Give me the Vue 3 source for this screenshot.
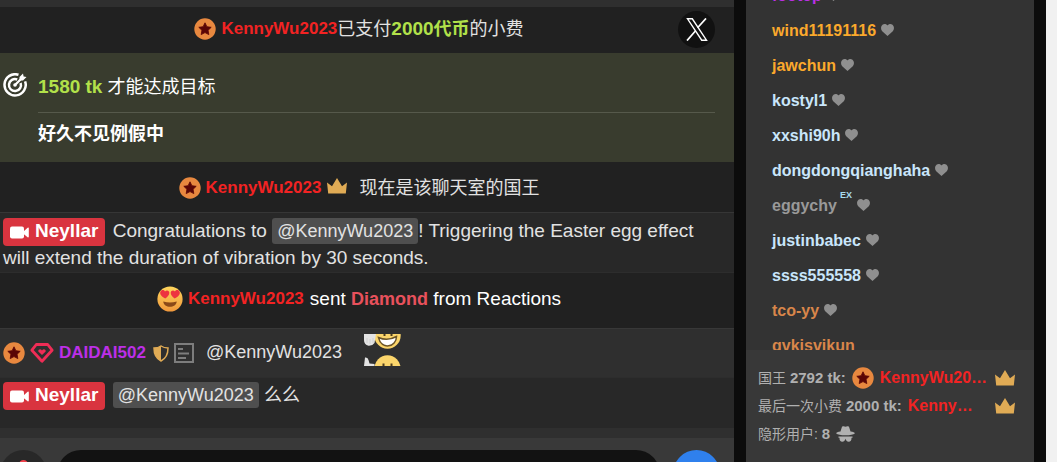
<script setup>
import { h } from 'vue'

const users = [
  { name: 'footop', tone: 'violet' },
  { name: 'wind11191116', tone: 'amber' },
  { name: 'jawchun', tone: 'amber' },
  { name: 'kostyl1', tone: 'ice' },
  { name: 'xxshi90h', tone: 'ice' },
  { name: 'dongdongqianghaha', tone: 'ice' },
  { name: 'eggychy', tone: 'grey', ex: true },
  { name: 'justinbabec', tone: 'ice' },
  { name: 'ssss555558', tone: 'ice' },
  { name: 'tco-yy', tone: 'copper' },
  { name: 'gvkisvikun', tone: 'copper', plain: true },
]

const StarBadge = () =>
  h('svg', { width: 22, height: 22, viewBox: '0 0 22 22', 'aria-hidden': 'true' }, [
    h('circle', { cx: 11, cy: 11, r: 10.7, fill: '#e8883f' }),
    h('path', {
      d: 'M11 4.8l1.9 3.9 4.3.6-3.1 3 .7 4.3-3.8-2-3.8 2 .7-4.3-3.1-3 4.3-.6z',
      fill: '#5a0505', stroke: '#5a0505', 'stroke-width': 0.8, 'stroke-linejoin': 'round',
    }),
  ])

const Crown = () =>
  h('svg', { width: 20, height: 16, viewBox: '0 0 20 16', 'aria-hidden': 'true' }, [
    h('path', { d: 'M1.2 15.5L0 4.6l5 3.6L10 0l5 8.2 5-3.6-1.2 10.9z', fill: '#e0ab55' }),
  ])

const Camera = () =>
  h('svg', { width: 19, height: 13, viewBox: '0 0 19 13', 'aria-hidden': 'true' }, [
    h('rect', { x: 0, y: 0.5, width: 14, height: 12, rx: 2, fill: '#fff' }),
    h('path', { d: 'M13 6l4.6-4.2q1.2-.6 1.2.6v8.2q0 1.200-1.200.6L13 7.600z', fill: '#fff' }),
  ])
</script>

<template>
  <div class="page">
    <main class="chat">
      <div class="log">
        <div class="sliver"></div>
        <div class="row tip">
          <StarBadge />
          <a class="name red lead" href="#">KennyWu2023</a>
          <span>已支付<b class="lime">2000<span class="cjk">代币</span></b>的小费</span>
          <a class="share" href="#" aria-label="X">
            <svg width="22" height="23" viewBox="0 0 22 23" aria-hidden="true">
              <path d="M1.500.8h4.800l14.200 21.400h-4.800z" fill="none" stroke="#fff" stroke-width="1.400" />
              <path d="M20 .4l-8.400 9.400M9.600 12.700L1 22.600" stroke="#fff" stroke-width="1.700" />
            </svg>
          </a>
        </div>

        <div class="goal">
          <svg class="target" width="24" height="24" viewBox="0 0 24 24" fill="none" stroke="#fff" aria-hidden="true">
            <path d="M15.500 1.800A10.600 10.600 0 1 0 22.100 8.300" stroke-width="2.500" />
            <path d="M14.200 6.500A6 6 0 1 0 17.600 10" stroke-width="2.500" />
            <path d="M12 12l7-7" stroke-width="2.300" />
            <circle cx="12" cy="12" r="1.800" fill="#fff" stroke="none" />
            <path d="M16.500 7.500V4L20 .5l.6 2.900 2.900.6L20 7.500z" fill="#fff" stroke="none" />
          </svg>
          <div class="goal-body">
            <p class="goal-left"><b class="lime">1580 tk</b> 才能达成目标</p>
            <p class="goal-title">好久不见例假中</p>
          </div>
        </div>

        <div class="row king">
          <StarBadge />
          <a class="name red lead" href="#">KennyWu2023</a>
          <Crown class="after-name" />
          <span class="king-text">现在是该聊天室的国王</span>
        </div>

        <div class="message notice">
          <a class="model" href="#"><Camera />Neyllar</a>
          Congratulations to <span class="mention">@KennyWu2023</span>! Triggering the Easter egg effect
          will extend the duration of vibration by 30 seconds.
        </div>

        <div class="row reaction">
          <svg width="26" height="26" viewBox="0 0 26 26" aria-hidden="true">
            <defs>
              <linearGradient id="face" x1="0" y1="0" x2="0" y2="1">
                <stop offset="0" stop-color="#ffd65c" />
                <stop offset="1" stop-color="#f0983c" />
              </linearGradient>
            </defs>
            <circle cx="13" cy="13" r="12.600" fill="url(#face)" />
            <path d="M8.300 12.500C4.500 10.500 2.500 8 3.400 5.700 4.400 3.600 7 3.600 8 5.600c1.400-1.700 4-1.200 4.300 1 .2 2.300-1.700 4.500-4 5.900zM17.700 12.500c3.800-2 5.800-4.500 4.900-6.800-1-2.100-3.600-2.100-4.600-.1-1.400-1.700-4-1.200-4.300 1-.2 2.300 1.700 4.500 4 5.900z" fill="#ed3440" />
            <path d="M6.300 15.500q6.700 2 13.400 0c-.3 7-13.100 7-13.400 0z" fill="#8a4918" />
          </svg>
          <a class="name red lead" href="#">KennyWu2023</a>
          <span class="reaction-text">sent <b class="coral">Diamond</b> from Reactions</span>
        </div>

        <div class="row fan">
          <StarBadge />
          <svg width="24" height="20" viewBox="0 0 24 20" fill="none" aria-hidden="true">
            <path d="M6.300 1.500h11.400l4.400 5.700L12 18.300 1.900 7.200z" stroke="#ef2d56" stroke-width="2.800" stroke-linejoin="round" />
            <path d="M12 12L8.300 8.500q-.5-2 1.600-2.200 1.300.1 2.100 1.200.8-1.100 2.100-1.200 2.100.2 1.600 2.200z" fill="#ef2d56" />
          </svg>
          <a class="name violet" href="#">DAIDAI502</a>
          <svg class="shield" width="16" height="17" viewBox="0 0 16 17" aria-hidden="true">
            <path d="M8 1q3 2 7 2 0 9.500-7 13Q1 12.500 1 3q4 0 7-2z" fill="none" stroke="#e0ab55" stroke-width="1.500" />
            <path d="M8 1Q5 3 1 3q0 9.500 7 13z" fill="#e0ab55" />
          </svg>
          <svg width="20" height="20" viewBox="0 0 20 20" fill="none" stroke="#7d7d7d" stroke-width="2" aria-hidden="true">
            <path d="M1 1h18v18H1zM4 6h5M4 10.500h11M4 15h8M11 6h0" />
          </svg>
          <span class="plain">@KennyWu2023</span>
          <svg class="thumbs" width="37" height="32" viewBox="0 0 37 32" aria-hidden="true">
            <circle cx="23.500" cy="1.500" r="13.200" fill="#fbd56b" />
            <path d="M14.500 3.500q9 4 18-1c0 10.500-15 14-18 1z" fill="#fff" stroke="#6b5427" stroke-width="1.500" />
            <path d="M20.500 0v2M27.500 0v2" stroke="#4e3d1c" stroke-width="2" />
            <path d="M0 0h12l-1.500 9q-2 3-6 2.800Q0 10.500 0 6z" fill="#e3e3e3" />
            <path d="M3 4v5M6 5v5M9 4v5" stroke="#cfcfcf" stroke-width="1" />
            <circle cx="23.500" cy="34.500" r="13.200" fill="#fbd56b" />
            <path d="M19.500 29.500v3M27.500 29.500v3" stroke="#4e3d1c" stroke-width="2" />
            <path d="M1 23.500q3-.5 3.500 2.500l1 3.500 5 .5v2H0z" fill="#e3e3e3" />
          </svg>
        </div>

        <div class="message last">
          <a class="model" href="#"><Camera />Neyllar</a>{{ ' ' }}
          <span class="mention">@KennyWu2023</span> <span class="cjk">么么</span>
        </div>
      </div>

      <form class="composer" @submit.prevent>
        <button class="round media" type="button" aria-label="Media">
          <svg width="20" height="24" viewBox="0 0 20 24" aria-hidden="true">
            <rect x="5" y="0" width="9" height="16" rx="4.500" fill="#f0424c" />
          </svg>
        </button>
        <input class="entry" type="text" aria-label="Message" />
        <button class="round send" type="submit" aria-label="Send"></button>
      </form>
    </main>

    <aside class="side">
      <ul class="users">
        <li v-for="u in users" :key="u.name">
          <a :class="u.tone" href="#">{{ u.name }}</a>
          <sup v-if="u.ex">EX</sup>
          <svg v-if="!u.plain" class="heart" width="13" height="12" viewBox="0 0 13 12" aria-hidden="true">
            <path d="M6.500 12L1.200 7.200C-.6 5.200-.1 2.100 1.500.8 3.200-.5 5.300 0 6.500 1.500 7.700 0 9.800-.5 11.500.8c1.600 1.300 2.100 4.400.3 6.400z" fill="#8f8f8f" />
          </svg>
        </li>
      </ul>
      <div class="stats">
        <div class="stat">
          <span>国王 <b>2792 tk:</b></span>
          <StarBadge />
          <a class="clip red" href="#">KennyWu2023</a>
          <Crown class="end" />
        </div>
        <div class="stat">
          <span>最后一次小费 <b>2000 tk:</b></span>
          <a class="clip short red" href="#">KennyWu2023</a>
          <Crown class="end" />
        </div>
        <div class="stat">
          <span>隐形用户: <b>8</b></span>
          <svg width="19" height="16" viewBox="0 0 19 16" fill="#b0b0b0" aria-hidden="true">
            <path d="M4.500 5.500L6 .8q.5-1 1.600-.5 1.900.8 3.800 0Q12.500-.2 13 .8l1.500 4.700q4 .5 4.500 1.700-2.500 2-9.500 2T0 7.200q.5-1.200 4.500-1.700z" />
            <path d="M2.500 10.500h14v1.200h-1c.2 2.500-1 4-2.800 4-1.700 0-2.500-1.200-3.200-3-.7 1.800-1.500 3-3.200 3-1.800 0-3-1.500-2.800-4h-1z" />
          </svg>
        </div>
      </div>
    </aside>
    <div class="gutter"></div>
  </div>
</template>

<style>
body {
  margin: 0;
  background: #0c0c0c;
}
</style>

<style scoped>
.page {
  display: flex;
  height: 100vh;
  overflow: hidden;
  background: #0c0c0c;
  color: #e2e2e2;
  font-family: "Liberation Sans", "Noto Sans CJK SC", sans-serif;
  font-size: 18px;
}
a { text-decoration: none; }
svg { flex: none; }
p { margin: 0; }

.chat {
  flex: 1;
  min-width: 0;
  display: flex;
  flex-direction: column;
  background: #2f2f2f;
}
.log {
  flex: 1;
  min-height: 0;
  overflow: hidden;
}
.sliver { height: 7px; }
.row {
  display: flex;
  align-items: center;
  box-sizing: border-box;
  line-height: 24px;
  white-space: nowrap;
}
.name {
  font-size: 17px;
  font-weight: bold;
}
.lead { margin-left: 5px; }
.red { color: #f22323; }
.violet { color: #bd2fe8; }
.lime { color: #b2e14a; font-size: 19px; }
.coral { color: #e8515c; font-size: 18px; }

.tip {
  position: relative;
  height: 46px;
  justify-content: center;
  padding: 0 16px 2px 0;
  background: #212121;
}
.share {
  position: absolute;
  right: 19px;
  top: 4px;
  width: 37px;
  height: 37px;
  border-radius: 50%;
  background: #111;
  display: flex;
  align-items: center;
  justify-content: center;
}

.goal {
  display: flex;
  padding: 20px 19px 14px 3px;
  background: #393c2e;
  color: #fff;
}
.target { margin-right: 11px; }
.goal-body {
  flex: 1;
  line-height: 28px;
}
.goal-left {
  padding-bottom: 11px;
  border-bottom: 1px solid #56594b;
}
.goal-title {
  padding-top: 7px;
  font-weight: bold;
}

.king {
  height: 50px;
  justify-content: center;
  padding: 2px 16px 0 0;
  background: #212121;
}
.after-name { margin-left: 6px; margin-bottom: 4px; }
.king-text { margin-left: 12px; }

.message {
  padding: 4px 24px 0 3px;
  border-top: 1px solid #363636;
  background: #282828;
  font-size: 19px;
  line-height: 27px;
}
.notice { padding-bottom: 1px; }
.model {
  margin-right: 2px;
  padding: 2px 7px 5px 7px;
  border-radius: 4px;
  background: #d9343f;
  color: #fff;
  font-weight: bold;
  line-height: 20px;
}
.model svg {
  margin-right: 6px;
  vertical-align: -2px;
}
.mention {
  padding: 3px 5px;
  border-radius: 3px;
  background: #4f4f4f;
  font-size: 18px;
  line-height: 20px;
}
.cjk {
  font-size: 18px;
  line-height: 20px;
}

.reaction {
  height: 56px;
  justify-content: center;
  padding: 0 16px 4px 0;
  border-top: 1px solid #2d2d2d;
  background: #212121;
}
.reaction-text {
  margin-left: 6px;
  color: #fff;
  font-size: 19px;
}
.fan {
  height: 49px;
  gap: 5px;
  padding-left: 3px;
  border-top: 1px solid #383838;
}
.shield { margin-left: 2px; }
.plain {
  margin-left: 7px;
  margin-bottom: 2px;
}
.thumbs {
  margin-left: 17px;
  margin-bottom: 6px;
}
.last {
  border-top-color: #2d2d2d;
  padding: 3px 24px 20px 3px;
}

.composer {
  flex: none;
  display: flex;
  align-items: flex-start;
  height: 24px;
  box-sizing: border-box;
  padding: 12px 14px 0 0;
  overflow: hidden;
  background: #393939;
}
.round {
  flex: none;
  width: 47px;
  height: 47px;
  padding: 0;
  border: 0;
  border-radius: 50%;
}
.media {
  display: flex;
  justify-content: center;
  padding-top: 10px;
  background: #282828;
}
.entry {
  flex: 1;
  min-width: 0;
  height: 47px;
  margin: 0 13px 0 10px;
  border: 0;
  border-radius: 24px;
  background: #121212;
  color: #fff;
}
.send { background: #2f80ed; }

.side {
  flex: 0 0 288px;
  min-width: 0;
  display: flex;
  flex-direction: column;
  margin: 0 12px;
  background: #333;
}
.users {
  flex: 1;
  min-height: 0;
  overflow: hidden;
  margin: 0;
  padding: 0 0 0 26px;
  list-style: none;
  font-size: 16px;
  font-weight: bold;
}
.users li {
  display: flex;
  align-items: center;
  height: 35px;
}
.users li:first-child { margin-top: -22px; }
.amber { color: #fba92c; }
.ice { color: #c9e6fb; }
.grey { color: #999; }
.copper { color: #d9864a; }
.heart { margin: 0 0 2px 5px; }
sup {
  margin-left: 3px;
  padding-bottom: 22px;
  color: #a9dcf0;
  font-size: 9px;
  line-height: 12px;
}
.stats {
  flex: none;
  padding: 14px 19px 14px 12px;
  background: #383838;
  color: #b0b0b0;
  font-size: 14px;
}
.stat {
  display: flex;
  align-items: center;
  gap: 6px;
  height: 28px;
  line-height: 20px;
  white-space: nowrap;
}
.stat b { font-size: 15px; }
.clip {
  flex: 0 1 108px;
  min-width: 0;
  overflow: hidden;
  text-overflow: ellipsis;
  font-size: 16px;
  font-weight: bold;
}
.short { flex-basis: 72px; }
.end { margin-left: auto; }
.gutter {
  flex: 0 0 11px;
  background: #f1f1f1;
}
</style>
